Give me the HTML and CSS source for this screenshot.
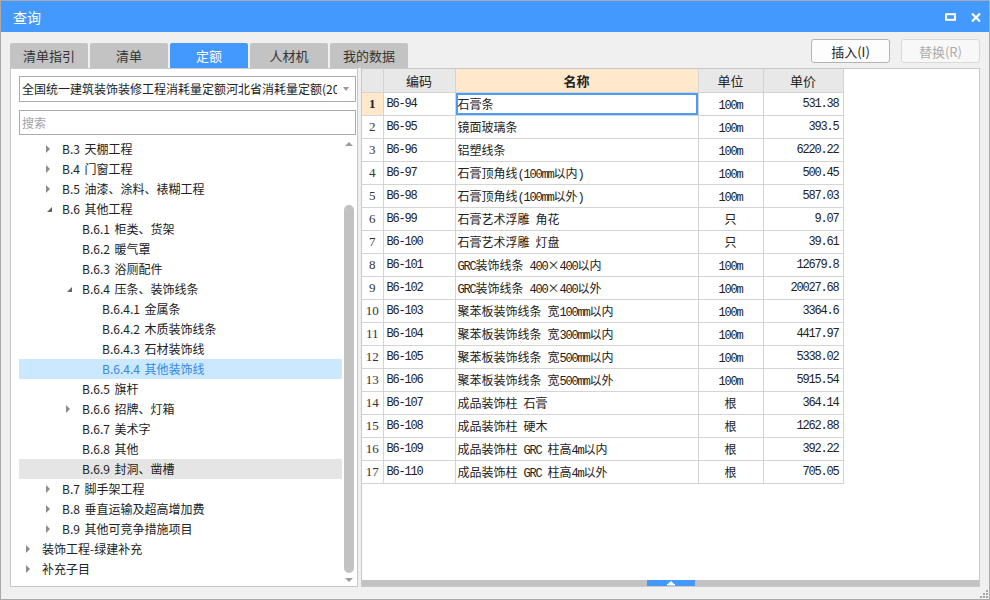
FILE: index.html
```html
<!DOCTYPE html>
<html lang="zh-CN">
<head>
<meta charset="utf-8">
<title>查询</title>
<link rel="stylesheet" href="styles.css">
</head>
<body>
<div class="window">
  <div class="titlebar">
    <span class="title">查询</span>
    <div class="win-btns">
      <svg class="ico-max" width="11" height="8" viewBox="0 0 11 8"><rect x="1" y="1.2" width="9" height="5.6" fill="none" stroke="#fff" stroke-width="2"/></svg>
      <svg class="ico-close" width="10" height="9" viewBox="0 0 10 9"><path d="M1 0.5L9 8.5M9 0.5L1 8.5" stroke="#fff" stroke-width="2.2"/></svg>
    </div>
  </div>

  <div class="toolbar">
    <div class="tabs">
      <div class="tab">清单指引</div>
      <div class="tab">清单</div>
      <div class="tab active">定额</div>
      <div class="tab">人材机</div>
      <div class="tab">我的数据</div>
    </div>
    <div class="actions">
      <button class="btn">插入(I)</button>
      <button class="btn disabled">替换(R)</button>
    </div>
  </div>

  <div class="content">
    <div class="left">
      <div class="select">
        <span class="select-text">全国统一建筑装饰装修工程消耗量定额河北省消耗量定额(2020)</span>
        <span class="caret"></span>
      </div>
      <div class="search">搜索</div>
      <div class="tree">
        <div class="tree-list">
          <div class="row l2"><i class="tw c"></i><span>B.3 天棚工程</span></div>
          <div class="row l2"><i class="tw c"></i><span>B.4 门窗工程</span></div>
          <div class="row l2"><i class="tw c"></i><span>B.5 油漆、涂料、裱糊工程</span></div>
          <div class="row l2"><i class="tw e"></i><span>B.6 其他工程</span></div>
          <div class="row l3"><i class="tw"></i><span>B.6.1 柜类、货架</span></div>
          <div class="row l3"><i class="tw"></i><span>B.6.2 暖气罩</span></div>
          <div class="row l3"><i class="tw"></i><span>B.6.3 浴厕配件</span></div>
          <div class="row l3"><i class="tw e"></i><span>B.6.4 压条、装饰线条</span></div>
          <div class="row l4"><i class="tw"></i><span>B.6.4.1 金属条</span></div>
          <div class="row l4"><i class="tw"></i><span>B.6.4.2 木质装饰线条</span></div>
          <div class="row l4"><i class="tw"></i><span>B.6.4.3 石材装饰线</span></div>
          <div class="row l4 sel"><i class="tw"></i><span>B.6.4.4 其他装饰线</span></div>
          <div class="row l3"><i class="tw"></i><span>B.6.5 旗杆</span></div>
          <div class="row l3"><i class="tw c"></i><span>B.6.6 招牌、灯箱</span></div>
          <div class="row l3"><i class="tw"></i><span>B.6.7 美术字</span></div>
          <div class="row l3"><i class="tw"></i><span>B.6.8 其他</span></div>
          <div class="row l3 hov"><i class="tw"></i><span>B.6.9 封洞、凿槽</span></div>
          <div class="row l2"><i class="tw c"></i><span>B.7 脚手架工程</span></div>
          <div class="row l2"><i class="tw c"></i><span>B.8 垂直运输及超高增加费</span></div>
          <div class="row l2"><i class="tw c"></i><span>B.9 其他可竞争措施项目</span></div>
          <div class="row l1"><i class="tw c"></i><span>装饰工程-绿建补充</span></div>
          <div class="row l1"><i class="tw c"></i><span>补充子目</span></div>
        </div>
        <div class="vscroll">
          <div class="sb-up"></div>
          <div class="sb-track"><div class="sb-thumb"></div></div>
          <div class="sb-down"></div>
        </div>
      </div>
    </div>

    <div class="right">
      <div class="grid">
        <table>
          <colgroup>
            <col class="w-rn"><col class="w-code"><col class="w-name"><col class="w-unit"><col class="w-price">
          </colgroup>
          <thead>
            <tr><th class="rn"></th><th>编码</th><th class="hname">名称</th><th>单位</th><th>单价</th></tr>
          </thead>
          <tbody>
            <tr class="cur"><td class="rn">1</td><td class="code">B6-94</td><td class="name focus">石膏条</td><td class="unit"><span class="m">100m</span></td><td class="price">531.38</td></tr>
            <tr><td class="rn">2</td><td class="code">B6-95</td><td class="name">镜面玻璃条</td><td class="unit"><span class="m">100m</span></td><td class="price">393.5</td></tr>
            <tr><td class="rn">3</td><td class="code">B6-96</td><td class="name">铝塑线条</td><td class="unit"><span class="m">100m</span></td><td class="price">6220.22</td></tr>
            <tr><td class="rn">4</td><td class="code">B6-97</td><td class="name">石膏顶角线<span class="m">(100mm</span>以内<span class="m">)</span></td><td class="unit"><span class="m">100m</span></td><td class="price">500.45</td></tr>
            <tr><td class="rn">5</td><td class="code">B6-98</td><td class="name">石膏顶角线<span class="m">(100mm</span>以外<span class="m">)</span></td><td class="unit"><span class="m">100m</span></td><td class="price">587.03</td></tr>
            <tr><td class="rn">6</td><td class="code">B6-99</td><td class="name">石膏艺术浮雕<span class="m"> </span>角花</td><td class="unit">只</td><td class="price">9.07</td></tr>
            <tr><td class="rn">7</td><td class="code">B6-100</td><td class="name">石膏艺术浮雕<span class="m"> </span>灯盘</td><td class="unit">只</td><td class="price">39.61</td></tr>
            <tr><td class="rn">8</td><td class="code">B6-101</td><td class="name"><span class="m">GRC</span>装饰线条<span class="m"> 400</span>×<span class="m">400</span>以内</td><td class="unit"><span class="m">100m</span></td><td class="price">12679.8</td></tr>
            <tr><td class="rn">9</td><td class="code">B6-102</td><td class="name"><span class="m">GRC</span>装饰线条<span class="m"> 400</span>×<span class="m">400</span>以外</td><td class="unit"><span class="m">100m</span></td><td class="price">20027.68</td></tr>
            <tr><td class="rn">10</td><td class="code">B6-103</td><td class="name">聚苯板装饰线条<span class="m"> </span>宽<span class="m">100mm</span>以内</td><td class="unit"><span class="m">100m</span></td><td class="price">3364.6</td></tr>
            <tr><td class="rn">11</td><td class="code">B6-104</td><td class="name">聚苯板装饰线条<span class="m"> </span>宽<span class="m">300mm</span>以内</td><td class="unit"><span class="m">100m</span></td><td class="price">4417.97</td></tr>
            <tr><td class="rn">12</td><td class="code">B6-105</td><td class="name">聚苯板装饰线条<span class="m"> </span>宽<span class="m">500mm</span>以内</td><td class="unit"><span class="m">100m</span></td><td class="price">5338.02</td></tr>
            <tr><td class="rn">13</td><td class="code">B6-106</td><td class="name">聚苯板装饰线条<span class="m"> </span>宽<span class="m">500mm</span>以外</td><td class="unit"><span class="m">100m</span></td><td class="price">5915.54</td></tr>
            <tr><td class="rn">14</td><td class="code">B6-107</td><td class="name">成品装饰柱<span class="m"> </span>石膏</td><td class="unit">根</td><td class="price">364.14</td></tr>
            <tr><td class="rn">15</td><td class="code">B6-108</td><td class="name">成品装饰柱<span class="m"> </span>硬木</td><td class="unit">根</td><td class="price">1262.88</td></tr>
            <tr><td class="rn">16</td><td class="code">B6-109</td><td class="name">成品装饰柱<span class="m"> GRC </span>柱高<span class="m">4m</span>以内</td><td class="unit">根</td><td class="price">392.22</td></tr>
            <tr><td class="rn">17</td><td class="code">B6-110</td><td class="name">成品装饰柱<span class="m"> GRC </span>柱高<span class="m">4m</span>以外</td><td class="unit">根</td><td class="price">705.05</td></tr>
          </tbody>
        </table>
      </div>
      <div class="hbar">
        <div class="hbar-tab">
          <svg width="8" height="5" viewBox="0 0 8 5"><path d="M4 0L7 3H1Z" fill="#fff"/><rect x="0" y="3" width="8" height="1.5" fill="#fff"/></svg>
        </div>
      </div>
    </div>
  </div>

  <svg class="grip" width="10" height="10" viewBox="0 0 10 10">
    <rect x="7" y="1" width="2" height="2" fill="#a5a5a5"/>
    <rect x="4" y="4" width="2" height="2" fill="#a5a5a5"/>
    <rect x="7" y="4" width="2" height="2" fill="#a5a5a5"/>
    <rect x="1" y="7" width="2" height="2" fill="#a5a5a5"/>
    <rect x="4" y="7" width="2" height="2" fill="#a5a5a5"/>
    <rect x="7" y="7" width="2" height="2" fill="#a5a5a5"/>
  </svg>
</div>
</body>
</html>
```

FILE: styles.css
```css
* {
  box-sizing: border-box;
}

body {
  margin: 0;
  font-family: "Noto Sans CJK SC", "Microsoft YaHei", sans-serif;
  color: #222;
}

.window {
  position: relative;
  width: 990px;
  height: 600px;
  border: 1px solid #a9a9a9;
  background: #f0f0f0;
  display: flex;
  flex-direction: column;
}

/* title bar */
.titlebar {
  height: 31px;
  flex: none;
  background: #4499ff;
  display: flex;
  align-items: center;
  padding: 0 8px 0 12px;
  color: #fff;
}

.title {
  font-size: 14px;
  line-height: 16px;
}

.win-btns {
  margin-left: auto;
  display: flex;
  align-items: center;
  gap: 15px;
  padding-top: 1px;
}

.win-btns svg {
  display: block;
}

/* toolbar: tabs + buttons */
.toolbar {
  height: 36px;
  flex: none;
  display: flex;
  padding: 0 9px 0 9px;
}

.tabs {
  display: flex;
  gap: 2px;
  align-self: flex-end;
}

.tab {
  width: 78px;
  height: 25px;
  line-height: 25px;
  text-align: center;
  font-size: 13px;
  color: #333;
  background: #c3c3c3;
  border-radius: 2px 2px 0 0;
}

.tab.active {
  background: #4499ff;
  color: #fff;
}

.actions {
  margin-left: auto;
  margin-top: 7px;
  align-self: flex-start;
  display: flex;
  gap: 11px;
}

.btn {
  width: 79px;
  height: 24px;
  padding: 0;
  border: 1px solid #b4b4b4;
  border-radius: 3px;
  background: #fdfdfd;
  font-family: "Noto Sans CJK SC", sans-serif;
  font-size: 13px;
  color: #222;
}

.btn.disabled {
  border-color: #d9d9d9;
  color: #adadad;
  background: #f8f8f8;
}

/* main content */
.content {
  flex: 1;
  min-height: 0;
  display: flex;
  gap: 3px;
  padding: 0 9px 12px 9px;
}

.left {
  width: 348px;
  flex: none;
  background: #fff;
  border: 1px solid #c8c8c8;
  padding: 7px 1px 0 8px;
  display: flex;
  flex-direction: column;
}

.select {
  height: 26px;
  flex: none;
  border: 1px solid #ababab;
  display: flex;
  align-items: center;
  padding-left: 2px;
  font-size: 12px;
}

.select-text {
  flex: 1;
  overflow: hidden;
  white-space: nowrap;
  line-height: 18px;
}

.caret {
  width: 18px;
  flex: none;
  display: flex;
  justify-content: center;
}

.caret::before {
  content: "";
  border-top: 4px solid #9a9a9a;
  border-left: 3px solid transparent;
  border-right: 3px solid transparent;
}

.search {
  margin-top: 8px;
  height: 25px;
  flex: none;
  border: 1px solid #ababab;
  padding-left: 2px;
  line-height: 23px;
  font-size: 12px;
  color: #a3a3a3;
}

.tree {
  margin-top: 2px;
  flex: 1;
  min-height: 0;
  display: flex;
}

.tree-list {
  flex: 1;
  padding-top: 2px;
}

.row {
  height: 20px;
  line-height: 20px;
  font-size: 12px;
  color: #222;
  white-space: nowrap;
  display: flex;
  align-items: center;
  word-spacing: 2px;
}

.row.l1 { padding-left: 3px; }
.row.l2 { padding-left: 23px; }
.row.l3 { padding-left: 43px; }
.row.l4 { padding-left: 63px; }

.row.sel {
  background: #cce8ff;
  color: #3589e6;
}

.row.hov {
  background: #e5e5e5;
}

.tw {
  width: 20px;
  height: 20px;
  flex: none;
  display: flex;
  align-items: center;
  padding-left: 4px;
}

.tw.c::before {
  content: "";
  border-left: 4px solid #8c8c8c;
  border-top: 4px solid transparent;
  border-bottom: 4px solid transparent;
}

.tw.e {
  padding-left: 5px;
}

.tw.e::before {
  content: "";
  border-bottom: 5px solid #666;
  border-left: 5px solid transparent;
}

.vscroll {
  width: 14px;
  flex: none;
  display: flex;
  flex-direction: column;
  align-items: center;
}

.sb-up {
  height: 14px;
  flex: none;
  display: flex;
  align-items: center;
  justify-content: center;
}

.sb-up::before {
  content: "";
  border-bottom: 4px solid #9c9c9c;
  border-left: 4px solid transparent;
  border-right: 4px solid transparent;
}

.sb-track {
  flex: 1;
  width: 100%;
  padding: 54px 2px 0;
}

.sb-thumb {
  height: 368px;
  background: #c2c2c2;
  border-radius: 5px;
}

.sb-down {
  height: 12px;
  flex: none;
  display: flex;
  align-items: center;
  justify-content: center;
}

.sb-down::before {
  content: "";
  border-top: 4px solid #9c9c9c;
  border-left: 4px solid transparent;
  border-right: 4px solid transparent;
}

/* right grid */
.right {
  flex: 1;
  min-width: 0;
  background: #fff;
  border: 1px solid #c8c8c8;
  display: flex;
  flex-direction: column;
}

.grid {
  flex: 1;
  min-height: 0;
}

table {
  border-collapse: collapse;
  table-layout: fixed;
  width: 481px;
}

col.w-rn { width: 21px; }
col.w-code { width: 72px; }
col.w-name { width: 243px; }
col.w-unit { width: 65px; }
col.w-price { width: 80px; }

th, td {
  height: 23px;
  border: 1px solid #d4d4d4;
  padding: 0;
  white-space: nowrap;
  overflow: hidden;
}

th {
  border-top: 0;
  background: #e8e8e8;
  font-weight: normal;
  font-size: 13px;
  color: #222;
  text-align: center;
}

th.hname {
  background: #ffe8cb;
  font-weight: bold;
}

th.rn, td.rn {
  border-left: 0;
}

td.rn {
  text-align: center;
  font-family: "Liberation Serif", serif;
  font-size: 13px;
  color: #333;
}

tr.cur td.rn {
  background: #ffe8cb;
  font-weight: bold;
  color: #222;
}

td.code,
td.price,
.m {
  font-family: "Liberation Mono", monospace;
  font-size: 12px;
  letter-spacing: -1.2px;
}

td.code {
  padding-left: 3px;
}

td.name {
  padding-left: 2px;
  font-size: 12px;
}

td.name.focus {
  box-shadow: inset 0 0 0 2px #4a9cf6;
}

td.unit {
  text-align: center;
  font-size: 12px;
}

td.price {
  text-align: right;
  padding-right: 4px;
}

.hbar {
  height: 6px;
  flex: none;
  background: #c2c2c2;
  display: flex;
  justify-content: center;
}

.hbar-tab {
  width: 48px;
  background: #4499ff;
  display: flex;
  align-items: center;
  justify-content: center;
}

.hbar-tab svg {
  display: block;
}

.grip {
  position: absolute;
  right: 0;
  bottom: 0;
}
```
